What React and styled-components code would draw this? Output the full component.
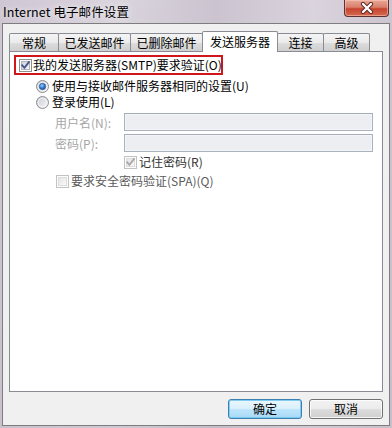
import React, { useId } from "react";
import styled, { createGlobalStyle } from "styled-components";

const Global = createGlobalStyle`
  html, body { margin: 0; padding: 0; background: #fff; }
  body { font-family: "Noto Sans CJK SC", "Noto Sans", sans-serif; }
`;

const Window = styled.div`
  width: 392px;
  height: 428px;
  box-sizing: border-box;
  display: flex;
  flex-direction: column;
  padding: 0 2px 2px 2px;
  background:
    linear-gradient(90deg, rgba(200,190,205,0.6), rgba(225,218,226,0.2) 30%, rgba(190,182,196,0.5) 55%, rgba(222,214,224,0.3) 80%, rgba(196,188,200,0.6)),
    linear-gradient(180deg, #d9d3dc, #cbc5cf);
`;

const TitleBar = styled.div`
  height: 23px;
  display: flex;
  justify-content: space-between;
  align-items: flex-start;
  flex: none;
`;

const Title = styled.div`
  padding-left: 1px;
  line-height: 24px;
  font-size: 12.5px;
  color: #000;
  letter-spacing: 0.1px;
  text-shadow: 0 0 6px rgba(255,255,255,0.9);
`;

const CloseBtn = styled.div`
  width: 45px;
  height: 17px;
  margin-right: 1px;
  box-sizing: border-box;
  border: 1px solid #5e3030;
  border-top: none;
  border-radius: 0 0 4px 4px;
  background: linear-gradient(180deg, #e9a796 0%, #d8806c 45%, #c6442f 55%, #d5694f 100%);
  box-shadow: inset 0 0 0 1px rgba(255,210,200,0.5);
  display: flex;
  align-items: center;
  justify-content: center;
`;

const Client = styled.div`
  flex: 1;
  display: flex;
  flex-direction: column;
  border: 1px solid #7d7d80;
  background: #f0f0f0;
  padding: 7px 6px 6px 6px;
  min-height: 0;
`;

const TabStrip = styled.div`
  height: 20px;
  display: flex;
  align-items: flex-end;
  flex: none;
  position: relative;
  z-index: 1;
`;

const Tab = styled.div`
  box-sizing: border-box;
  width: ${(p) => p.$w}px;
  height: ${(p) => (p.$active ? 21 : 18)}px;
  margin-bottom: ${(p) => (p.$active ? -1 : 0)}px;
  border: 1px solid #898c95;
  border-bottom: ${(p) => (p.$active ? "none" : "none")};
  border-radius: 2px 2px 0 0;
  margin-right: -1px;
  background: ${(p) =>
    p.$active ? "#ffffff" : "linear-gradient(180deg, #f4f4f4 0%, #ebebeb 50%, #dddddd 51%, #cfcfcf 100%)"};
  font-size: 12px;
  color: #000;
  text-align: center;
  line-height: ${(p) => (p.$active ? 19 : 18)}px;
  white-space: nowrap;
`;

const Panel = styled.div`
  flex: 1;
  border: 1px solid #898c95;
  background: #fff;
  display: flex;
  flex-direction: column;
  padding: 3px 0 0 0;
  min-height: 0;
`;

const RequiredBox = styled.div`
  box-sizing: border-box;
  width: 209px;
  height: 20px;
  margin-left: 4px;
  border: 2px solid #d0161a;
  display: flex;
  align-items: center;
  padding-left: 3px;
  gap: 1px;
`;

const Row = styled.div`
  height: 16px;
  display: flex;
  align-items: center;
  margin-left: ${(p) => p.$indent}px;
  margin-top: ${(p) => p.$top}px;
  gap: ${(p) => p.$gap ?? 3}px;
  flex: none;
`;

const Label = styled.span`
  font-size: 12px;
  line-height: 16px;
  color: ${(p) => p.$color || "#000"};
  white-space: nowrap;
`;

const FieldRow = styled.div`
  height: 18px;
  display: flex;
  align-items: center;
  margin-left: 45px;
  margin-top: ${(p) => p.$top}px;
  flex: none;
`;

const FieldLabel = styled.span`
  width: 69px;
  font-size: 12px;
  color: #a6a6a6;
  white-space: nowrap;
`;

const TextBox = styled.div`
  box-sizing: border-box;
  width: 249px;
  height: 18px;
  border: 1px solid #aab3bd;
  border-top-color: #a3acb7;
  background: #eceef1;
  box-shadow: inset 0 0 0 1px #f4f5f7;
`;

const ButtonRow = styled.div`
  display: flex;
  justify-content: flex-end;
  gap: 7px;
  margin-top: 7px;
  flex: none;
`;

const Button = styled.div`
  box-sizing: border-box;
  width: 74px;
  height: 20px;
  border-radius: 3px;
  border: 1px solid ${(p) => (p.$default ? "#3c7fb1" : "#707070")};
  background: ${(p) =>
    p.$default
      ? "linear-gradient(180deg, #eaf6fd 0%, #d9f0fc 50%, #bee6fd 51%, #a7d9f5 100%)"
      : "linear-gradient(180deg, #f2f2f2 0%, #ebebeb 50%, #dddddd 51%, #cfcfcf 100%)"};
  box-shadow: inset 0 0 0 1px ${(p) => (p.$default ? "rgba(120,200,240,0.9)" : "rgba(255,255,255,0.8)")};
  font-size: 12px;
  line-height: 18px;
  text-align: center;
  color: #000;
`;

function CheckBox({ checked, disabled }) {
  const id = "cb" + useId().replace(/[^a-zA-Z0-9]/g, "");
  return (
    <svg width="13" height="13" viewBox="0 0 13 13" style={{ flex: "none" }}>
      <defs>
        <linearGradient id={id} x1="0" y1="0" x2="1" y2="1">
          <stop offset="0" stopColor={disabled ? "#e4e4e4" : "#cdd0d6"} />
          <stop offset="1" stopColor={disabled ? "#fafafa" : "#f7f7f7"} />
        </linearGradient>
      </defs>
      <rect x="0.5" y="0.5" width="12" height="12" fill="#fdfdfd" stroke={disabled ? "#c2c2c2" : "#8e8f8f"} />
      <rect x="2.5" y="2.5" width="8" height="8" fill={`url(#${id})`} stroke={disabled ? "#dcdcdc" : "#b4b6ba"} />
      {checked && (
        <path
          d="M3.2 6.3 L5.4 8.8 L9.9 3.2"
          fill="none"
          stroke={disabled ? "#a9a9a9" : "#46588f"}
          strokeWidth="1.9"
          strokeLinecap="square"
        />
      )}
    </svg>
  );
}

function Radio({ checked }) {
  const id = "rd" + useId().replace(/[^a-zA-Z0-9]/g, "");
  return (
    <svg width="13" height="13" viewBox="0 0 13 13" style={{ flex: "none" }}>
      <defs>
        <linearGradient id={id + "o"} x1="0" y1="0" x2="1" y2="1">
          <stop offset="0" stopColor="#c9ccd2" />
          <stop offset="1" stopColor="#f6f6f6" />
        </linearGradient>
        <radialGradient id={id + "d"} cx="0.4" cy="0.35" r="0.7">
          <stop offset="0" stopColor="#9fd2ff" />
          <stop offset="0.5" stopColor="#3a82d4" />
          <stop offset="1" stopColor="#1d4c94" />
        </radialGradient>
      </defs>
      <circle cx="6.5" cy="6.5" r="6" fill={`url(#${id}o)`} stroke="#8b8d90" strokeWidth="1" />
      <circle cx="6.5" cy="6.5" r="4.3" fill="none" stroke="#ffffff" strokeOpacity="0.7" strokeWidth="0.8" />
      {checked && <circle cx="6.5" cy="6.5" r="3.2" fill={`url(#${id}d)`} stroke="#2a5193" strokeWidth="0.6" />}
    </svg>
  );
}

const tabs = [
  { label: "常规", w: 50 },
  { label: "已发送邮件", w: 73 },
  { label: "已删除邮件", w: 73 },
  { label: "发送服务器", w: 76, active: true },
  { label: "连接", w: 47 },
  { label: "高级", w: 47 },
];

export default function App() {
  return (
    <>
      <Global />
      <Window>
        <TitleBar>
          <Title>Internet 电子邮件设置</Title>
          <CloseBtn>
            <svg width="14" height="12" viewBox="0 0 14 12">
              <path d="M3 2 L11 10 M11 2 L3 10" stroke="#5a2320" strokeWidth="4.2" strokeLinecap="round" />
              <path d="M3 2 L11 10 M11 2 L3 10" stroke="#ffffff" strokeWidth="2.4" strokeLinecap="round" />
            </svg>
          </CloseBtn>
        </TitleBar>
        <Client>
          <TabStrip>
            {tabs.map((t) => (
              <Tab key={t.label} $w={t.w} $active={t.active}>
                {t.label}
              </Tab>
            ))}
          </TabStrip>
          <Panel>
            <RequiredBox>
              <CheckBox checked />
              <Label>我的发送服务器(SMTP)要求验证(O)</Label>
            </RequiredBox>
            <Row $indent={26} $top={3}>
              <Radio checked />
              <Label>使用与接收邮件服务器相同的设置(U)</Label>
            </Row>
            <Row $indent={26} $top={0}>
              <Radio />
              <Label>登录使用(L)</Label>
            </Row>
            <FieldRow $top={3}>
              <FieldLabel>用户名(N):</FieldLabel>
              <TextBox />
            </FieldRow>
            <FieldRow $top={3}>
              <FieldLabel>密码(P):</FieldLabel>
              <TextBox />
            </FieldRow>
            <Row $indent={114} $top={2} $gap={2}>
              <CheckBox checked disabled />
              <Label $color="#333">记住密码(R)</Label>
            </Row>
            <Row $indent={46} $top={3} $gap={2}>
              <CheckBox disabled />
              <Label $color="#5a5a5a">要求安全密码验证(SPA)(Q)</Label>
            </Row>
          </Panel>
          <ButtonRow>
            <Button $default>确定</Button>
            <Button>取消</Button>
          </ButtonRow>
        </Client>
      </Window>
    </>
  );
}
